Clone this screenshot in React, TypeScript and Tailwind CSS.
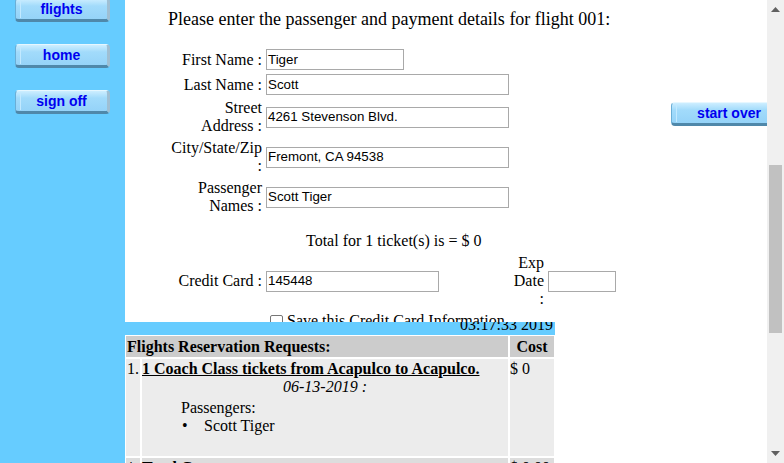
import React from "react";

const NavButton = ({ label, className }: { label: string; className?: string }) => {
    return (
        <div
            className={"relative shrink-0 h-[24px] rounded-[4px] border border-[#6aaed6] border-t-[#e6f7ff] border-b-[3px] border-b-[#4f88aa] border-r-[3px] border-r-[#9fbfd3] bg-[linear-gradient(to_bottom,#cdeeff,#a2dbfb_35%,#95d3f8)] flex items-center justify-center font-['Liberation_Sans',Arial,sans-serif] font-bold text-[14px] text-[#0000f0] overflow-hidden" + ` ${className ?? ""}`}
        >
            <span className="absolute left-[4px] top-[2px] bottom-[1px] w-[1px] bg-[#c2e9ff]" />
            {label}
        </div>
    )
}

const Field = ({ width, value }: { width: string; value?: string }) => {
    return (
        <div
            className={"shrink-0 h-[21px] border border-[#a9a9a9] bg-white px-[1px] flex items-center font-['Liberation_Sans',Arial,sans-serif] text-[13.33px] text-black whitespace-nowrap overflow-hidden " + width}
        >
            {value}
        </div>
    )
}

const FormRow = ({ label, children }: { label: React.ReactNode; children: React.ReactNode }) => {
    return (
        <div className="flex items-center py-[1px]">
            <div className="ml-[14px] w-[123px] text-right leading-[18px]">{label}</div>
            <div className="ml-[4px]">{children}</div>
        </div>
    )
}

const Scrollbar = () => {
    return (
        <div className="w-[17px] shrink-0 bg-[#f0f0f0] flex flex-col items-center">
            <svg width="9" height="5" viewBox="0 0 9 5" className="mt-[7px]">
                <polygon points="0,5 4.5,0 9,5" fill="#606060" />
            </svg>
            <div className="mt-[153px] h-[168px] w-[13px] bg-[#c1c1c1]" />
            <div className="flex-1" />
            <svg width="9" height="5" viewBox="0 0 9 5" className="mb-[7px]">
                <polygon points="0,0 9,0 4.5,5" fill="#606060" />
            </svg>
        </div>
    )
}

export default function App() {
    return (
        <div className="relative flex h-[463px] w-[784px] overflow-hidden font-['Liberation_Serif','Times_New_Roman',serif] text-black">
            {/* left nav */}
            <div className="w-[125px] shrink-0 bg-[#66ccff] flex flex-col pl-[15px] gap-[22px]">
                <NavButton label="flights" className="w-[95px] mt-[-2px]" />
                <NavButton label="home" className="w-[95px]" />
                <NavButton label="sign off" className="w-[95px]" />
            </div>

            {/* main page */}
            <div className="flex-1 bg-white flex overflow-hidden">
                <div className="w-[546px] shrink-0">
                    <div className="pl-[43px] pt-[9px] text-[18px] leading-[21px] whitespace-nowrap">
                        Please enter the passenger and payment details for flight 001:
                    </div>

                    <div className="mt-[18px] flex flex-col gap-[2px] text-[16px]">
                        <FormRow label="First Name :"><Field width="w-[138px]" value="Tiger" /></FormRow>
                        <FormRow label="Last Name :"><Field width="w-[243px]" value="Scott" /></FormRow>
                        <FormRow label={<>Street<br />Address :</>}><Field width="w-[243px]" value="4261 Stevenson Blvd." /></FormRow>
                        <FormRow label={<>City/State/Zip<br />:</>}><Field width="w-[243px]" value="Fremont, CA 94538" /></FormRow>
                        <FormRow label={<>Passenger<br />Names :</>}><Field width="w-[243px]" value="Scott Tiger" /></FormRow>
                    </div>

                    <div className="mt-[16px] ml-[181px] text-[16px] leading-[18px] whitespace-nowrap">
                        Total for 1 ticket(s) is = $ 0
                    </div>

                    <div className="mt-[4px] flex items-center text-[16px] leading-[18px]">
                        <div className="ml-[14px] w-[123px] text-right">Credit Card :</div>
                        <div className="ml-[4px]"><Field width="w-[173px]" value="145448" /></div>
                        <div className="ml-[65px] w-[40px] text-right">Exp<br />Date<br />:</div>
                        <div className="ml-[4px]"><Field width="w-[68px]" /></div>
                    </div>

                    <div className="mt-[4px] ml-[145px] flex items-center gap-[4px] text-[16px] leading-[18px]">
                        <div className="h-[13px] w-[13px] rounded-[2px] border border-[#767676] bg-white" />
                        <span className="whitespace-nowrap">Save this Credit Card Information</span>
                    </div>
                </div>

                <div className="shrink-0 pt-[102px]">
                    <NavButton label="start over" className="w-[118px]" />
                </div>
            </div>

            <Scrollbar />

            {/* reservation panel, sits over the form */}
            <div className="absolute left-[125px] top-[322px] w-[430px] h-[141px] bg-[#66ccff] overflow-hidden text-[16px]">
                <div className="h-[13px] overflow-hidden">
                    <div className="mt-[-6px] pr-[2px] text-right leading-[18px]">03:17:33 2019</div>
                </div>
                <div className="bg-white p-[1px] grid grid-cols-[14px_366px_44px] gap-[2px] leading-[18px]">
                    <div className="col-span-2 h-[21px] bg-[#cccccc] pl-[1px] pt-[2px] font-bold whitespace-nowrap">Flights Reservation Requests:</div>
                    <div className="h-[21px] bg-[#cccccc] pt-[2px] text-center font-bold">Cost</div>

                    <div className="bg-[#ececec] pl-[1px] pt-[1px]">1.</div>
                    <div className="h-[97px] bg-[#ececec] pt-[1px]">
                        <div className="font-bold underline whitespace-nowrap">1 Coach Class tickets from Acapulco to Acapulco.</div>
                        <div className="italic text-center">06-13-2019 :</div>
                        <div className="ml-[39px] mt-[3px]">
                            <div>Passengers:</div>
                            <div className="flex">
                                <span className="w-[23px] pl-[1px]">•</span>
                                <span>Scott Tiger</span>
                            </div>
                        </div>
                    </div>
                    <div className="bg-[#ececec] pt-[1px]">$ 0</div>

                    <div className="h-[20px] bg-[#dddddd] pl-[1px] pt-[1px]">*</div>
                    <div className="h-[20px] bg-[#dddddd] pt-[1px] font-bold">Total Cost</div>
                    <div className="h-[20px] bg-[#dddddd] pt-[1px]">$ 0.00</div>
                </div>
            </div>
        </div>
    )
}
